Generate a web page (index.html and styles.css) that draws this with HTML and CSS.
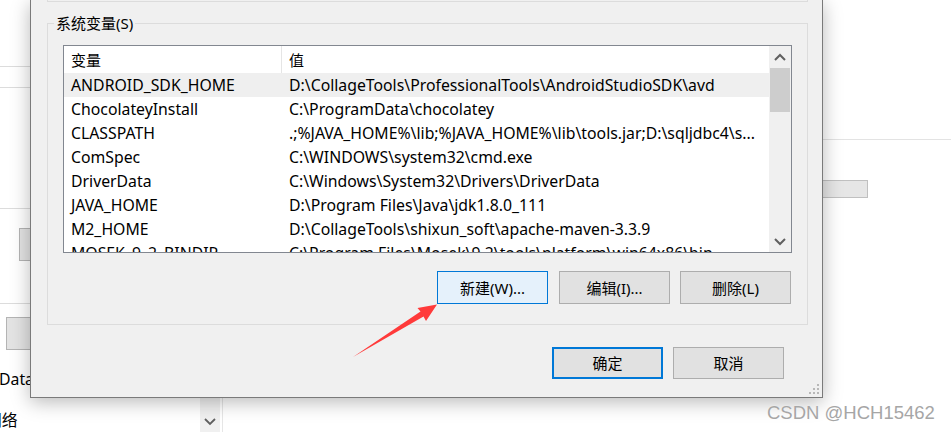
FILE: index.html
```html
<!DOCTYPE html>
<html lang="zh-CN">
<head>
<meta charset="utf-8">
<title>系统变量</title>
<link rel="stylesheet" href="styles.css">
</head>
<body>
<div class="desktop">
  <div class="bg-line bl-1"></div>
  <div class="bg-line bl-2"></div>
  <div class="bg-line bl-3"></div>
  <div class="bg-btn bb-1"></div>
  <div class="bg-line bl-4"></div>
  <div class="bg-btn bb-2"></div>
  <div class="bg-text bt-1">Data</div>
  <div class="bg-text bt-2">网络</div>
  <div class="bg-drop">
    <svg width="12" height="8" viewBox="0 0 12 8"><polyline points="1,1 6,6 11,1" fill="none" stroke="#606060" stroke-width="1.8"/></svg>
  </div>
  <div class="bg-vline"></div>
  <div class="bg-line bl-right"></div>
  <div class="bg-btn bb-right"></div>
</div>

<div class="dialog">
  <div class="prev-group"></div>
  <div class="group">
    <span class="group-label">系统变量(S)</span>
    <div class="list">
      <div class="rows">
        <div class="row head">
          <div class="cell c1">变量</div>
          <div class="cell c2">值</div>
        </div>
        <div class="row hover">
          <div class="cell c1">ANDROID_SDK_HOME</div>
          <div class="cell c2">D:\CollageTools\ProfessionalTools\AndroidStudioSDK\avd</div>
        </div>
        <div class="row">
          <div class="cell c1">ChocolateyInstall</div>
          <div class="cell c2">C:\ProgramData\chocolatey</div>
        </div>
        <div class="row">
          <div class="cell c1">CLASSPATH</div>
          <div class="cell c2">.;%JAVA_HOME%\lib;%JAVA_HOME%\lib\tools.jar;D:\sqljdbc4\s...</div>
        </div>
        <div class="row">
          <div class="cell c1">ComSpec</div>
          <div class="cell c2">C:\WINDOWS\system32\cmd.exe</div>
        </div>
        <div class="row">
          <div class="cell c1">DriverData</div>
          <div class="cell c2">C:\Windows\System32\Drivers\DriverData</div>
        </div>
        <div class="row">
          <div class="cell c1">JAVA_HOME</div>
          <div class="cell c2">D:\Program Files\Java\jdk1.8.0_111</div>
        </div>
        <div class="row">
          <div class="cell c1">M2_HOME</div>
          <div class="cell c2">D:\CollageTools\shixun_soft\apache-maven-3.3.9</div>
        </div>
        <div class="row">
          <div class="cell c1">MOSEK_9_2_BINDIR</div>
          <div class="cell c2">C:\Program Files\Mosek\9.2\tools\platform\win64x86\bin</div>
        </div>
      </div>
      <div class="scrollbar">
        <div class="sb-btn">
          <svg width="12" height="8" viewBox="0 0 12 8"><polyline points="1,7 6,2 11,7" fill="none" stroke="#606060" stroke-width="2"/></svg>
        </div>
        <div class="sb-thumb"></div>
        <div class="sb-track"></div>
        <div class="sb-btn">
          <svg width="12" height="8" viewBox="0 0 12 8"><polyline points="1,1 6,6 11,1" fill="none" stroke="#606060" stroke-width="2"/></svg>
        </div>
      </div>
    </div>
    <div class="btn-row">
      <button class="btn btn-focus btn-new">新建(W)...</button>
      <button class="btn">编辑(I)...</button>
      <button class="btn">删除(L)</button>
    </div>
  </div>
  <div class="dlg-buttons">
    <button class="btn btn-default">确定</button>
    <button class="btn">取消</button>
  </div>
  <svg class="grip" width="12" height="12" viewBox="0 0 12 12">
    <rect x="8" y="0" width="2" height="2" fill="#b8b8b8"/>
    <rect x="4" y="4" width="2" height="2" fill="#b8b8b8"/>
    <rect x="8" y="4" width="2" height="2" fill="#b8b8b8"/>
    <rect x="0" y="8" width="2" height="2" fill="#b8b8b8"/>
    <rect x="4" y="8" width="2" height="2" fill="#b8b8b8"/>
    <rect x="8" y="8" width="2" height="2" fill="#b8b8b8"/>
  </svg>
</div>

<svg class="arrow" width="110" height="70" viewBox="0 0 110 70">
  <polygon points="13,62 80.5,16.5 77.5,13 97,9.5 86,26 83.5,21.5" fill="#ff3a3a"/>
</svg>

<div class="watermark">CSDN @HCH15462</div>
</body>
</html>
```

FILE: styles.css
```css
* { box-sizing: border-box; }

html, body {
  margin: 0;
  padding: 0;
}

body {
  width: 951px;
  height: 432px;
  overflow: hidden;
  position: relative;
  background: #ffffff;
  font-family: "Noto Sans", "Noto Sans CJK SC", sans-serif;
  font-size: 15px;
  color: #000;
}

/* ---- background window fragments ---- */
.desktop {
  position: absolute;
  inset: 0;
}

.bg-line {
  position: absolute;
  left: 0;
  width: 40px;
  height: 1px;
  background: #dcdcdc;
}
.bl-1 { top: 66px; }
.bl-2 { top: 87px; }
.bl-3 { top: 208px; }
.bl-4 { top: 303px; }
.bl-right { left: 815px; width: 140px; top: 139px; background: #e3e3e3; }

.bg-btn {
  position: absolute;
  background: #e3e3e3;
  border: 1px solid #b4b4b4;
}
.bb-1 { left: 19px; top: 228px; width: 30px; height: 33px; }
.bb-2 { left: 6px; top: 317px; width: 40px; height: 33px; }
.bb-right { left: 800px; top: 180px; width: 68px; height: 18px; background: #e6e6e6; border-color: #c0c0c0; }

.bg-text {
  position: absolute;
  line-height: 20px;
  font-size: 15.8px;
  white-space: nowrap;
}
.bt-1 { left: -1px; top: 369px; }
.bt-2 { left: -14px; top: 410px; }

.bg-drop {
  position: absolute;
  left: 200px;
  top: 398px;
  width: 20px;
  height: 40px;
  background: #f0f0f0;
  display: flex;
  justify-content: center;
  padding-top: 20px;
}
.bg-vline {
  position: absolute;
  left: 222px;
  top: 398px;
  width: 1px;
  height: 40px;
  background: #e6e6e6;
}

/* ---- dialog ---- */
.dialog {
  position: absolute;
  left: 30px;
  top: 0;
  width: 793px;
  height: 398px;
  background: #f0f0f0;
  border: 1px solid #7a7a7a;
  border-top: none;
  box-shadow: 0 4px 18px rgba(0, 0, 0, 0.28);
  padding: 0 14px 0 16px;
}

.prev-group {
  height: 2px;
  border: 1px solid #dcdcdc;
  border-top: none;
}

.group {
  position: relative;
  margin-top: 21px;
  border: 1px solid #dcdcdc;
  padding: 21px 15px 20px 15px;
}

.group-label {
  position: absolute;
  left: 6px;
  top: -11px;
  padding: 0 2px;
  line-height: 20px;
  background: #f0f0f0;
}

.list {
  display: flex;
  height: 208px;
  border: 1px solid #828790;
  background: #fff;
}

.rows {
  flex: 1;
  overflow: hidden;
}

.row {
  display: grid;
  grid-template-columns: 218px 1fr;
  height: 24px;
  line-height: 24px;
  font-size: 15.8px;
  white-space: nowrap;
}

.row.head {
  height: 27px;
  line-height: 28px;
  font-size: 15px;
}
.row.head .c1 {
  border-right: 1px solid #e5e5e5;
}

.row.hover {
  background: #efefef;
}

.cell {
  padding-left: 7px;
  overflow: hidden;
}

.scrollbar {
  width: 22px;
  background: #f0f0f0;
  display: flex;
  flex-direction: column;
}

.sb-btn {
  height: 21px;
  display: flex;
  align-items: center;
  justify-content: center;
}

.sb-thumb {
  margin: 1px 1px 0;
  height: 44px;
  background: #cdcdcd;
}

.sb-track {
  flex: 1;
}

.btn-row {
  display: flex;
  justify-content: flex-end;
  gap: 10px;
  margin-top: 18px;
  padding-right: 1px;
}

.btn {
  font: inherit;
  color: #000;
  width: 111px;
  height: 33px;
  padding: 0;
  background: #e1e1e1;
  border: 1px solid #adadad;
  border-radius: 0;
  line-height: 20px;
}

.btn-new { margin-right: 1px; }

.btn-focus {
  background: #e5f1fb;
  border-color: #0078d7;
}

.dlg-buttons {
  display: flex;
  justify-content: flex-end;
  gap: 10px;
  margin-top: 22px;
  padding-right: 24px;
}
.dlg-buttons .btn { height: 32px; }

.btn-default {
  border: 2px solid #0078d7;
}

.grip {
  position: absolute;
  right: 1px;
  bottom: 1px;
}

/* ---- overlays ---- */
.arrow {
  position: absolute;
  left: 340px;
  top: 295px;
}

.watermark {
  position: absolute;
  left: 767px;
  top: 402px;
  font-family: "Liberation Sans", Arial, sans-serif;
  font-size: 18.5px;
  line-height: 22px;
  color: #a6a6a6;
  text-shadow: 0 0 1px #fff;
  white-space: nowrap;
}
```
